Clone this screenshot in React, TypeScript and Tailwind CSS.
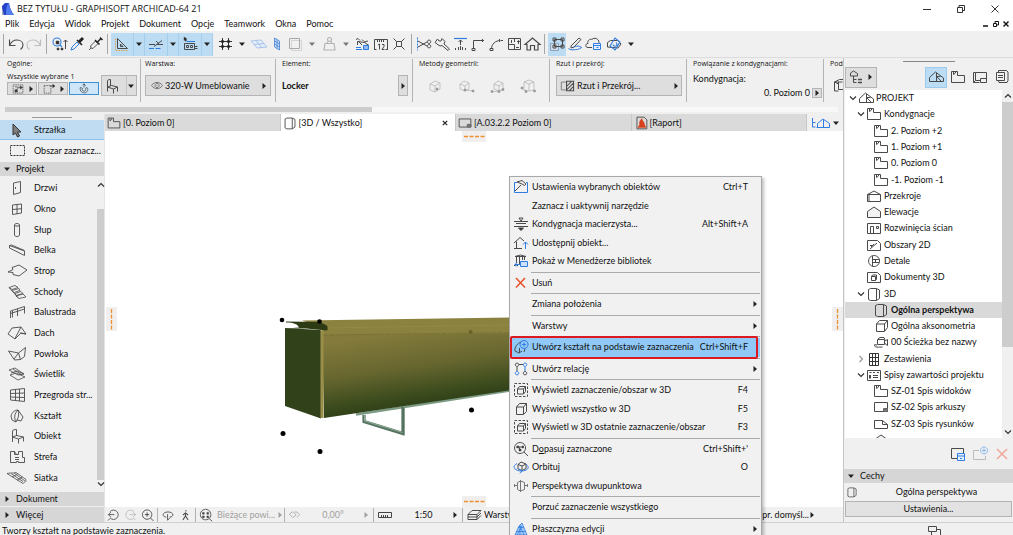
import React from "react";

type Shape = { d: string; c?: string; f?: string; w?: number; dash?: string };

const BLUE = "#2f7de1";
const RED = "#d9411e";
const ORANGE = "#e0a050";

const ICONS: Record<string, Shape[]> = {
  undo: [{ d: "M3.5 3.5v6h6M3.5 9.5C5 6 8 4 11 4c4 0 6 2.5 6 5 0 2-1 3.5-2.5 4.5", w: 1.1 }],
  redo: [{ d: "M16.5 3.5v6h-6M16.5 9.5C15 6 12 4 9 4 5 4 3 6.5 3 9c0 2 1 3.5 2.5 4.5", c: "#bdbdbd", w: 1.1 }],
  find: [
    { d: "M12 6a4 4 0 1 1-8 0 4 4 0 0 1 8 0M11 9l2 2", c: BLUE, w: 1.1 },
    { d: "M16.5 13V4M14.5 6l2-2 2 2" },
    { d: "M7 5h3v3H7zM8 12h2v2H8zM12 12h2v2h-2z", f: "#333", w: 0.5 },
  ],
  pick: [
    { d: "M4 14l1-3 5-5 2 2-5 5z", c: BLUE },
    { d: "M10 4l5 5", c: "#222", w: 1.6 },
    { d: "M12 6l4-4", c: "#222", w: 3 },
  ],
  inject: [
    { d: "M4 14l2-2M6 12l-.5-2 5-5 2.5 2.5-5 5z", c: "#555" },
    { d: "M10 4l4.5 4.5M12.5 6L16 2.5M15 1.5l2.5 2.5", c: "#222", w: 1.5 },
  ],
  setsquare: [
    { d: "M5.5 2.5v10h10zM8.5 8v2.5H11z" },
    { d: "M3.5 2.5v12h13", c: ORANGE, dash: "1.5 1" },
  ],
  guide: [
    { d: "M3 12.5h13", c: BLUE, dash: "5 1.5" },
    { d: "M3 8.5h6M8 10.5l8-6M10 5l3 3M11 8.5h6" },
  ],
  snapref: [
    { d: "M4.5 7.5h10v6h-10zM6.5 9.5h2v2h-2zM10.5 9.5h2v2h-2zM14.5 10.5h3M14.5 12.5h3" },
    { d: "M4 1l3 2-1 .5.5 1.5-1 .3-.7-1.5L4 4.5z", f: "#222", w: 0.5 },
    { d: "M7 5.5h8", c: BLUE },
  ],
  hash: [
    { d: "M7.5 2v12M13.5 2v12M4 5.5h13M4 10.5h13", c: "#333" },
    { d: "M6.5 4.5h2v2h-2zM12.5 4.5h2v2h-2zM6.5 9.5h2v2h-2zM12.5 9.5h2v2h-2z", w: 0.5, f: "#222", c: "#222" },
  ],
  planeFlat: [{ d: "M2 5l10-1 6 7-10 1zM5 8.5l10-1M7 4.7l6 7", c: "#a8c4ea", f: "#e4edf9" }],
  planeTilt: [{ d: "M7.5 2l5 3v9l-5-3zM7.5 5l5 3M7.5 8l5 3M10 3.5v9", c: "#5f92d8", f: "#c5dbf6" }],
  trace: [
    { d: "M6.5 4.5h10v10h-10z", c: "#d4d4d4" },
    { d: "M4.5 2.5h10v10h-10z", c: "#a8a8a8" },
  ],
  weight: [{ d: "M6 7.5h9l1 6.5H5zM8.5 7V5.5M12.5 7V5.5M10.5 1.5a2 2 0 1 0 .1 0", c: "#b4b4b4", w: 1.2 }],
  truck: [
    { d: "M4.5 9V5.5l7 1 4.5 3M3 3.5l2-1 2 2M11 6l4-1M5 5l4 4M9 3.5l2 2" },
    { d: "M10.5 9.5h5v4h-5zM3 13.5h6M3 11.5h5", c: BLUE, f: "#8fb9f0" },
  ],
  ruler12: [{ d: "M3.5 14V3.5h13V14M6.5 4v2M8.5 4v2M10.5 4v2M12.5 4v2M7 9l1.5-1v5.5M11 8.5h2v2l-2 3h2.500M3.5 13.5h2M14.500 13.5h2" }],
  explode: [{ d: "M7.5 5.5h5v5h-5zM4.5 2.5l3 3M15.5 2.5l-3 3M4.5 13.5l3-3M15.5 13.5l-3-3" }],
  scissors: [
    { d: "M3.5 1.5v13", c: BLUE, dash: "2 1" },
    { d: "M4 5l9 5M4 11l9-5M15 4a1.7 1.7 0 1 0 .1 0M15 8.5a1.7 1.7 0 1 0 .1 0" },
  ],
  wrench: [{ d: "M3 6.500L5.500 3l1.500 2h2l1-2.500 3 3-1 2.500 5.500 5-1.500 1.500L10 9.500 8 10 5 8z" }],
  align: [
    { d: "M4 2.500h13", c: BLUE, w: 1.2 },
    { d: "M10.5 9V4M8.5 6l2-2 2 2M5.5 12v2M8.5 11v3M10.500 10v4M12.5 11v3M15.500 12v2" },
  ],
  corner: [{ d: "M5.5 13V4.5H16M4 12.5h3v2H4zM14.5 3v3" }],
  fillet: [{ d: "M5.5 13c0-5 4-8.5 9-8.5M13.5 3v3M4 12.5h3v2H4zM15 4.5h2" }],
  resize: [{ d: "M4.5 2.5h12v11h-12zM4.5 8.5h6v5M10.5 3v3M7.5 4v3M12 11.5h3M14.5 5v3M13 6l1.5-1.5L16 6" }],
  house: [{ d: "M3 8.5L10.5 2 18 8.5h-2V14h-3.5V9.5h-4V14H5V8.5z", w: 1.2 }],
  group: [
    { d: "M3.5 7.5h8v7h-8z", c: "#8aa4bd", f: "#d0dde8" },
    { d: "M7.5 3.5h8v7h-8zM6 2h3v3H6zM14 2h3v3h-3zM6 9h3v3H6zM14 9h3v3h-3z" },
  ],
  markup: [
    { d: "M6 10l8-8 2 1.5-7 7.5-3 1z" },
    { d: "M4 12c-2 3 13 2 12.5-1M8 12c3-3 9-2 8 0", c: BLUE },
  ],
  cloud: [
    { d: "M9 11.5H5c-3 0-3-4 0-4-1-3 2-5 4-4 2-2.5 7-1 7 3l.5.5" },
    { d: "M10.5 7.5h7v6h-7zM10.5 9.5h7M13.5 11.5h2", c: BLUE, f: "#e7f1ff" },
  ],
  cube3: [
    { d: "M3.5 11V6.5l3-2h7l3.5 3.5-3 4-10.500-1z" },
    { d: "M6 10l5-8 5 4-5 8zM9 8.5a2 2 0 1 0 3-2", c: BLUE, w: 1.1 },
  ],
  pointer: [{ d: "M6 2l8 8h-3.5l2 4-2 1-2-4L6 13z", f: "#808080", c: "#333" }],
  marquee: [{ d: "M3.5 2.5h14v10h-14z", dash: "2 1", c: "#333" }],
  marqueeArrow: [
    { d: "M3.5 3.5h9v10h-9z", dash: "2 1" },
    { d: "M11 4h5M15 2l3 2-3 2z", f: "#222" },
  ],
  selArrow: [
    { d: "M3.5 2.5h13v11h-13z", dash: "2 1" },
    { d: "M6 11l5-5M6 5l7 1M13 4l3 2-3 2zM6 9h3v3H6z", f: "#333" },
  ],
  magnetic: [{ d: "M5 6c-1 5 3 8 7 7 3-1 4-5 2-7l-2 1c1 2 0 4-2 4S7 9 8 7zM10 1v5M8 3l2-2 2 3" }],
  chair: [{ d: "M5.5 13.5V3c0-1 1-1.5 3-1.5V8M5.5 9l4-1.5 6 1.5-4 2zM11.5 11v4.5M15.5 9v4.5" }],
  eye: [{ d: "M2 8c4-6 12-6 16 0-4 6-12 6-16 0zM10 5a3 3 0 1 0 .1 0M10 7.5v1.5" }],
  hatch: [
    { d: "M3.5 3.5h6v9h-6z", c: "#777" },
    { d: "M9.5 2.5h8v11h-8zM10 8l5-5M10 12l7-7M13 13l4-4", w: 1.2 },
  ],
  geo1: [{ d: "M5 6l5-3 5 2v6l-5 3-5-2zM5 6l5 2 5-3M10 8v6" , c: "#c2c2c2" }, { d: "M11 10h2v2h-2z", c: "#999", f: "#999", w: 0.5 }],
  geo2: [{ d: "M4 6l4-3 5 2v6l-4 2-5-2zM4 6l5 2 4-3M9 8v5M9 12l8 1", c: "#c2c2c2" }, { d: "M8 11h2v2H8zM16 12h2v2h-2z", c: "#999", f: "#999", w: 0.5 }],
  geo3: [{ d: "M6 6l4-3 5 2v6l-4 2-5-2zM6 6l5 2 4-3M4 13.5h7l4-2M11 8v5", c: "#c2c2c2" }, { d: "M3 12.500h2v2H3zM10 12.500h2v2h-2zM14 10.500h2v2h-2z", c: "#999", f: "#999", w: 0.5 }],
  geo4: [{ d: "M5 4l5-2 5 2v8l-5 1-5-1zM5 4l5 2 5-2M3 10l3 3M10 6v7", c: "#c2c2c2" }, { d: "M2 9h2v2H2zM6 12.500h2v2H6zM14.500 12h2v2h-2z", c: "#999", f: "#999", w: 0.5 }],
  story: [{ d: "M3.5 2.5h6v4h7v7h-13zM5.5 3v2.5l2-1.5V3" }],
  sheet: [
    { d: "M3.5 3.5h13v9h-13z" },
    { d: "M12.5 9.5h4v3h-4z", f: "#777", c: "#666" },
  ],
  doc: [{ d: "M3.5 4.5h8l5 4v4h-13zM11.5 4.5v4h5" }],
  persp: [{ d: "M4.5 3.5l2-1h6v12h-6l-2-1zM12.500 2.500l3 1.500v8.500l-3 2" }],
  axo: [{ d: "M5.5 6l3-3.5h8v7l-3 4h-8zM5.5 6h8v7M13.5 6l3-3.5" }],
  path3: [{ d: "M6.5 5.5h7v5h-7zM14 7l2.5-1.5v6L14 9.5M7 5l2-1.5h4l1 2M3.5 11c0 3 4 2 8 2M6 11l-2.5-.5" }],
  report: [
    { d: "M5.5 1.5h8l3 3v10h-11z" },
    { d: "M11 3c-3 3-3 5-2.5 7L6.5 13h9l-1.5-3c0-3-2-3-3-7z", c: RED, f: RED, w: 0.5 },
  ],
  door: [{ d: "M6.5 3l7-1.5v11l-7 2zM8.5 7v2", w: 0.9 }],
  window: [{ d: "M5.5 4l9-1v9l-9 1.5zM10 3.5v9.5M5.5 8.5l9-.8", w: 0.9 }],
  column: [{ d: "M7.5 3v10c0 2 5 2 5 0V3c0-2-5-2-5 0zM7.5 3c0 1.5 5 1.5 5 0", w: 0.9 }],
  beam: [{ d: "M2.5 3.5l15 5.500v4.500l-15-7.500zM2.5 3.5l2-.5 13 5.500", w: 0.9 }],
  slab: [{ d: "M1 9l5-2.5-1-2 7-2.5 8 5-8 6-6-1.5v-2z", w: 0.9 }],
  stair: [{ d: "M2 3.5l6-2 3 2-6 2zM5 6.5l7-2 1 2-6 2zM8 9.5l6-2 2 2-7 2zM9 12l7-2 3 3-7 1.5zM2 3.5l9 10", w: 0.8 }],
  rail: [{ d: "M3.5 14V7l14-4.500v7M3.5 9.500l14-4.500M10.5 5v7M5.500 7v6.500", w: 0.9 }],
  roof: [{ d: "M1 9l4-6 9-1 5 7-5-1-6 6zM14 2L8 13.5M13 8l6 1", w: 0.9 }],
  shell: [{ d: "M1.5 5l10 2 7-5.500-1 9-4 3-6 .5zM7 13l4.5-6 2 6.500", w: 0.9 }],
  skylight: [{ d: "M2 4l6-2 9 6-6 1zM3 9l6-2 9 4-7 3zM4 7l6-2 7 3M6 3l9 6", w: 0.8 }],
  curtain: [{ d: "M3.5 3l14-1.5v13L3.5 13zM8.5 2.5v11M12.5 2v12M3.5 6.5l14-.5M3.5 10l14 .5", w: 0.9 }],
  morph: [{ d: "M4 8c1-4 4-6 7-6l5 7-2 4-4-1c2-3 2-7 1-10M11 2C7 6 7 10 9 14M4 8l1 4 4 2 1-2", w: 0.9 }],
  object: [{ d: "M5.5 14V3c0-1 2-1.5 4-1.5V8M5.5 9l4-1.5 7 1.5-5 2zM11.5 11v4.5M16.5 9v4.5", w: 0.9 }],
  zone: [{ d: "M3.5 2.5h4v3h4v-3h4v6h2v5h-6v-1h-2v1h-6zM7.5 2.5l2 3M8 8.5h4M8 10.5h4", w: 0.9 }],
  mesh: [{ d: "M0 3.5c5-1 6 0 9-1l10 7c0 4-2 2-3 4zM4 3.5l12 8M7 3l11 8M5 7c3-2 4-1 6-4M10 10.5c3-3 4-1 5-4", w: 0.8 }],
  home: [{ d: "M3.5 12.5V8.5L9.500 3l8 6v3.500zM10.5 4v8.500M10.5 7.500l5 5M10.500 7.500h4" }],
  homeBlue: [{ d: "M1.5 3v9h3M1.5 7.5h3M6.5 12.5V8.5L12 4l6.5 4.5v4M5.5 12.5h13M12.5 5v7.5", c: BLUE }],
  section: [{ d: "M3.5 6.5L10 3l6.5 3.5v7h-13zM3.5 6.5h13M5 6.5v7" }],
  elev: [{ d: "M3.5 7.5L10 3l6.5 4.5v6h-13z", f: "#f2f2f2" }],
  interior: [{ d: "M3.5 3.5h13v10h-13zM6.5 13V6.5h3V13M12.5 6.5h2v2h-2z" }],
  area2d: [{ d: "M3.5 3.5h10l3 3v7h-13zM6 12l7-6M6 8.5h3M7 10l3-3" }],
  detail: [{ d: "M10 2.5a5.5 5.5 0 1 0 .1 0M8.5 3v10.5M8.5 6.5h7M8.5 9.5H15M11.5 6v4" }],
  doc3d: [{ d: "M3.5 3.5h10l3 3v7h-13zM7.5 7.5l1-1.5h4v4l-1 1.5h-4zM7.5 7.5h4v4" }],
  schedule: [{ d: "M5.5 2.5h9v12h-9zM8.5 2.5v12M11.5 2.5v12M5.5 6.5h9M5.5 10.5h9", c: "#333" }],
  index: [{ d: "M3.5 3.5h13v10h-13zM5.5 5.5h2M9 5.5h2M5.5 8v3.5M6.5 8v3.5M9 8.5h5M9 10.5h5M13 5.5h2" }],
  layout: [{ d: "M5.500 11.500V3.500H3.500v10l2-2M3.500 13.500h6M5.500 3.500h11v10h-6v-4h6M10.500 11.500h-5" }],
  book: [{ d: "M4.5 3.5h8v8h-8zM6.5 3V1.5h8l1.5 1.5v8.5l-1 2H7l-.5-2M6 6.5h5M6 8.500h5" }],
  pubtree: [{ d: "M4.5 7V4l3-2 4 2.5V7zM7.5 7v6.5h3M7.5 10.5h3" }, { d: "M12 10.5h4M12 13.5h4", w: 1.4 }],
  saveView: [
    { d: "M9 12.5H3.5v-10h12V7" },
    { d: "M9.5 7.5h7v7h-7zM9.5 10h7M12 12.5h2", c: BLUE, f: "#e7f1ff" },
  ],
  newView: [
    { d: "M9 4.5H3.5v9h12V10", c: "#bbb" },
    { d: "M14 1a3.5 3.5 0 1 0 .1 0M14 2.5v4M12 4.5h4", c: "#8db8ef" },
  ],
  cross: [{ d: "M5 3l9 9.5M14 3l-9 9.5", c: "#e8502a", w: 1.5 }],
  crossPale: [{ d: "M5 3l10 10M15 3L5 13", c: "#f0a898", w: 1.5 }],
  settings: [
    { d: "M6 3.5H3.5v10h13v-10H15", c: BLUE },
    { d: "M4 12l6-6M6 3l5-1.5 4 3.5-1.5 1.5L11 5z" },
  ],
  storey: [
    { d: "M3 5.5h14M5 7.5h10M3 10.5h14M8 2h4l-2 3z" },
    { d: "M7.5 12h5L10 14.5z", f: "#222" },
  ],
  share: [
    { d: "M3 8l6-5.5 4 3.5M5.5 6.5v7H11M3 13.5h3" },
    { d: "M14.5 14V7M12 9.5L14.5 7 17 9.5", c: BLUE },
  ],
  library: [
    { d: "M4 3.5L9.5 2 15 3.5zM5.5 4v7M8.5 4v7M11.5 4v3M13.5 4v3M3 12.5h4" },
    { d: "M9.5 8.5h7v5h-7zM4 11.5h5M6 9.5l-2 2 2 2", c: BLUE, f: "#cfe2fb" },
  ],
  morphAdd: [
    { d: "M4 12c-1-4 3-8 6-9M4 12l4 2 3-2M8.5 14V9M14 10l-1 3" },
    { d: "M13 1.5a4 4 0 1 0 .1 0M13 3.5v4M11 5.5h4", c: BLUE },
  ],
  relation: [
    { d: "M6 2a1.7 1.7 0 1 0 .1 0M14 10.5a1.7 1.7 0 1 0 .1 0M8 3.5h4M6 6v4" },
    { d: "M14 2a1.7 1.7 0 1 0 .1 0M6 10.5a1.7 1.7 0 1 0 .1 0M14 6v4", c: BLUE },
  ],
  boxSel: [
    { d: "M3.5 1.5h13v13h-13z", dash: "2.5 1.5" },
    { d: "M6.5 7l2-2.5h6v5l-2 2.5h-6zM6.5 7h6v5M12.5 7l2-2.5" },
  ],
  box: [{ d: "M5.5 6l3-3.5h7v8l-3 3h-7zM5.5 6h7v7M12.5 6l3-3.5" }],
  fit: [
    { d: "M9 1.5a5.5 5.5 0 1 0 .1 0M13 11l4 4" },
    { d: "M6 5h2v2H6zM11 5h1.5v2H11zM8 8h2v2H8z", f: "#333", w: 0.5 },
    { d: "M5 6h8M7 5l3 5" },
  ],
  orbit: [
    { d: "M7 5.5l3-2.5 5 2v4.5l-4 2-4-1.5zM7 5.5l4 1.5 4-2M11 7v4.5" },
    { d: "M6 4.5c-7 4 0 8 5 7.5 8-1 7-5 4-6.5M8 10l3 2-2 2.5", c: BLUE },
  ],
  twoPoint: [{ d: "M6.5 4.5l3-1.5 4 1.5v7l-4 1.5-3-1.5zM9.5 2v12M3 7.5h3M17 7.5h-3M3.5 6v3M16.5 6v3", c: "#777" }],
  editPlane: [{ d: "M4 14l4-9 3-3 5 12zM5 10.5h10M7 6.5h6M9 4v10M6 14l5-9M13 14L9 5", c: BLUE, f: "#a9cbf5", w: 0.8 }],
  zoomPrev: [{ d: "M6 4a5.5 5.5 0 1 1 0 7.5M4 7.5h7M7 4.5l-3 3 3 3M6 12l-2.5 2.5" }],
  zoomNext: [{ d: "M14 4a5.5 5.5 0 1 0 0 7.5M16 7.5H9M13 4.5l3 3-3 3M14 12l2.5 2.5", c: "#b9b9b9" }],
  zoomIn: [{ d: "M9.5 2a5.5 5.5 0 1 0 .1 0M13.5 11.5L17 15M7 7.5h5M9.5 5v5", w: 1.1 }],
  orbitSm: [{ d: "M8 10.5c-6-1-4-6 2-6s8 5 2 6M9.5 7v7l3-3" }],
  walk: [{ d: "M10.5 2v2M10 5v4l-3 5M10 9l3 5M7 8l3-2.5L13 8", w: 1.2 }],
  fitAll: [
    { d: "M9.5 1.5a6 6 0 1 0 .1 0M13.5 12L17 15" },
    { d: "M6 5h2v2H6zM11 5h2v2h-2zM6 9h2v2H6zM11 9h2v2h-2z", f: "#333", w: 0.5 },
  ],
  rotate: [{ d: "M4 7l4-3 4 4-4 3zM10 4.5h3l3 3-3 3.5", c: "#aaa" }],
  scale: [{ d: "M3.5 5.5h13v5h-13zM6.5 8v2M8.5 8v2M10.5 8v2M12.5 8v2", c: "#444" }],
  layers: [{ d: "M4 7.5l4-4h9l-4 4zM4 10h9l4-4M4 12.5h9l4-4M4 7.5v5M13 7.5v5" }],
  windows: [{ d: "M4.5 3.5h8v5h-8zM7.5 9v3.5h9v-6h-4" }],
  column3d: [{ d: "M4.5 5l5-2.5h7v10h-8V7zM4.5 5h8M8.5 7V5M4.5 5v9h4" }],
};

function Icon({ name, size = "h-4 w-5" }: { name: string; size?: string }) {
  return (
    <svg viewBox="0 0 20 16" className={`shrink-0 ${size}`} aria-hidden="true">
      {ICONS[name].map((p, i) => (
        <path key={i} d={p.d} fill={p.f ?? "none"} stroke={p.c ?? "#4a4a4a"} strokeWidth={p.w ?? 1} strokeDasharray={p.dash} />
      ))}
    </svg>
  );
}

function Tri({ dir = "right", className = "text-[#222]" }: { dir?: "right" | "down"; className?: string }) {
  return (
    <svg viewBox="0 0 6 6" className={`size-[6px] shrink-0 ${className}`} aria-hidden="true">
      <path d={dir === "right" ? "M1.5 0v6L5 3z" : "M0 1.5h6L3 5z"} fill="currentColor" />
    </svg>
  );
}

function Chevron({ dir }: { dir: "up" | "down" | "right" }) {
  const d = dir === "up" ? "M1 5.5L4 2.5l3 3" : dir === "down" ? "M1 2.5L4 5.5l3-3" : "M2.5 1L5.5 4l-3 3";
  return (
    <svg viewBox="0 0 8 8" className="size-[8px] shrink-0" aria-hidden="true">
      <path d={d} fill="none" stroke={dir === "right" ? "#999" : "#333"} strokeWidth="1.2" />
    </svg>
  );
}

const Bar = () => <span className="mx-[3px] h-5 w-px shrink-0 bg-[#a6a6a6]" />;

function Tool({ name, active }: { name: string; active?: boolean }) {
  return (
    <button aria-label={name} className={`flex h-[23px] w-[18px] shrink-0 items-center justify-center ${active ? "bg-[#bcdcf4]" : ""}`}>
      <Icon name={name} />
    </button>
  );
}

function Drop({ pale }: { pale?: boolean }) {
  return (
    <button aria-label="Rozwiń" className="flex h-[23px] w-4 shrink-0 items-center justify-center">
      <Tri dir="down" className={pale ? "text-[#777]" : "text-[#222]"} />
    </button>
  );
}

function SplitTool({ name }: { name: string }) {
  return (
    <div className="flex h-[23px] w-[34px] shrink-0 border-r border-[#a5cdec] bg-[#bcdcf4]">
      <button aria-label={name} className="flex w-[23px] items-center justify-center border-r border-[#a5cdec]">
        <Icon name={name} />
      </button>
      <button aria-label="Rozwiń" className="flex flex-1 items-center justify-center">
        <Tri dir="down" />
      </button>
    </div>
  );
}

function TitleBar() {
  return (
    <header className="bg-white">
      <div className="flex h-[17px] items-center pl-[2px]">
        <svg viewBox="0 0 12 12" className="size-3" aria-hidden="true">
          <path d="M0 12V3l3-3h4c1 5 2 8 5 12z" fill="#2340c8" />
          <path d="M4 12C4 7 4 3 6.5 0 8 5 9 9 12 12z" fill="#4f7df0" />
          <path d="M0 12V4l2 8z" fill="#9aa4c0" />
        </svg>
        <h1 className="ml-[3px] flex-1 font-['Open_Sans','Noto_Sans',sans-serif]">BEZ TYTUŁU - GRAPHISOFT ARCHICAD-64 21</h1>
        <div className="flex w-[90px] items-center justify-between pr-[14px]">
          <button aria-label="Minimalizuj"><svg viewBox="0 0 8 8" className="size-2"><path d="M0 4.5h8" stroke="#333" /></svg></button>
          <button aria-label="Przywróć"><svg viewBox="0 0 8 8" className="size-2"><path d="M.5 2.5h5v5h-5zM2 2.5v-2h5.5v5h-2" fill="none" stroke="#333" /></svg></button>
          <button aria-label="Zamknij"><svg viewBox="0 0 8 8" className="size-2"><path d="M.5 .5l7 7M7.5 .5l-7 7" stroke="#333" /></svg></button>
        </div>
      </div>
      <div className="flex h-[14px] items-center pl-[5px]">
        <nav className="flex flex-1 gap-[10px]">
          {["Plik", "Edycja", "Widok", "Projekt", "Dokument", "Opcje", "Teamwork", "Okna", "Pomoc"].map((m) => (
            <button key={m}>{m}</button>
          ))}
        </nav>
        <div className="flex gap-[4px] pr-[4px]">
          <button aria-label="Minimalizuj okno"><svg viewBox="0 0 6 6" className="size-[6px]"><path d="M0 5h5" stroke="#111" strokeWidth="1.5" /></svg></button>
          <button aria-label="Przywróć okno"><svg viewBox="0 0 6 6" className="size-[6px]"><path d="M.5 2.5h3v3h-3zM2 2V.5h3.5v3.5H4" fill="none" stroke="#111" /></svg></button>
          <button aria-label="Zamknij okno"><svg viewBox="0 0 6 6" className="size-[6px]"><path d="M.5 .5l5 5M5.5 .5l-5 5" stroke="#111" strokeWidth="1.4" /></svg></button>
        </div>
      </div>
    </header>
  );
}

function Toolbar() {
  return (
    <div className="flex h-[27px] shrink-0 items-center border-b border-[#dcdcdc]">
      <Bar />
      <Tool name="undo" /><Tool name="redo" /><Bar />
      <Tool name="find" /><Tool name="pick" /><Tool name="inject" /><Bar />
      <SplitTool name="setsquare" /><SplitTool name="guide" /><SplitTool name="snapref" />
      <span className="w-[3px]" />
      <Tool name="hash" /><Drop /><Tool name="planeFlat" /><Tool name="planeTilt" /><Tool name="trace" /><Drop pale />
      <Tool name="weight" /><Drop pale /><Tool name="truck" /><Tool name="ruler12" /><Tool name="explode" /><Bar />
      <Tool name="scissors" /><Tool name="wrench" /><Tool name="align" /><Tool name="corner" /><Tool name="fillet" /><Tool name="resize" /><Tool name="house" />
      <Bar />
      <Tool name="group" active /><Tool name="markup" /><Tool name="cloud" />
      <span className="w-[3px]" />
      <Tool name="cube3" /><Drop />
    </div>
  );
}

const label7 = "font-['Open_Sans','Noto_Sans',sans-serif] text-[7px] leading-[10px]";

function Section({ title, children }: { title: string; children: React.ReactNode }) {
  return (
    <section className="mr-[6px] flex h-[43px] w-[131px] shrink-0 flex-col border-r border-[#b4b4b4] pr-[4px]">
      <h2 className={label7}>{title}</h2>
      {children}
    </section>
  );
}

const field = "flex items-center border border-[#b4b4b4] bg-[#dedede]";

function InfoBox() {
  return (
    <div className="h-[56px] shrink-0 overflow-hidden">
      <div className="flex h-[49px] pt-[1px] pl-[7px]">
        <section className="mr-[4px] flex h-[43px] w-[134px] shrink-0 border-r border-[#b4b4b4]">
          <div className="w-[94px]">
            <h2 className={label7}>Ogólne:</h2>
            <p className={`mt-[3px] ${label7}`}>Wszystkie wybrane 1</p>
            <div className="flex gap-px">
              <button aria-label="Zaznaczone" className={`${field} h-[13px] w-[30px] justify-between pr-[3px]`}><Icon name="selArrow" size="h-3 w-5" /><Tri /></button>
              <button aria-label="Obszar" className={`${field} h-[13px] w-[30px] justify-between pr-[3px]`}><Icon name="marqueeArrow" size="h-3 w-5" /><Tri /></button>
              <button aria-label="Przyciąganie" className="flex h-[13px] w-[30px] items-center justify-center border border-[#3c8fd0] bg-[#cfe6f8]"><Icon name="magnetic" size="h-3 w-5" /></button>
            </div>
          </div>
          <button aria-label="Krzesło" className={`${field} mt-4 h-[21px] w-9 justify-between pr-[2px]`}>
            <Icon name="chair" />
            <span className="flex h-full items-center border-l border-[#c4c4c4] pl-px"><Tri dir="down" /></span>
          </button>
        </section>
        <Section title="Warstwa:">
          <button className={`${field} mt-[6px] h-[21px] gap-px pr-[3px] pl-[4px]`}>
            <Icon name="eye" size="h-[11px] w-[14px]" />
            <span className="flex-1 text-left">320-W Umeblowanie</span>
            <Tri />
          </button>
        </Section>
        <Section title="Element:">
          <div className="mt-[6px] flex h-[21px] items-center justify-between">
            <b className="font-bold">Locker</b>
            <button aria-label="Wybierz element" className={`${field} h-[21px] w-[10px] justify-center`}><Tri /></button>
          </div>
        </Section>
        <Section title="Metody geometrii:">
          <div className="mt-[6px] flex h-[21px] items-center justify-around">
            {["geo1", "geo2", "geo3", "geo4"].map((g) => (
              <button key={g} aria-label={g}><Icon name={g} /></button>
            ))}
          </div>
        </Section>
        <Section title="Rzut i przekrój:">
          <button className={`${field} mt-[6px] h-[21px] pr-[2px]`}>
            <Icon name="hatch" size="h-[14px] w-5" />
            <span className="flex-1 text-left">Rzut i Przekrój...</span>
            <Tri />
          </button>
        </Section>
        <Section title="Powiązanie z kondygnacjami:">
          <p className="mt-[4px] leading-[12px]">Kondygnacja:</p>
          <div className="-mr-[3px] mt-[3px] flex items-center justify-end gap-[2px]">
            <span className="leading-[10px]">0. Poziom 0</span>
            <button aria-label="Wybierz kondygnację" className={`${field} size-[10px] justify-center`}><Tri /></button>
          </div>
        </Section>
        <section className="min-w-0 flex-1 overflow-hidden">
          <h2 className={label7}>Pods</h2>
          <div className="mt-[8px]"><Icon name="column3d" /></div>
        </section>
      </div>
      <div className="mx-[5px] h-[5px] bg-[#f8f8f8]">
        <div className="h-full w-[44%] bg-[#cdcdcd]" />
      </div>
    </div>
  );
}

const TOOLS: [string, string][] = [
  ["door", "Drzwi"], ["window", "Okno"], ["column", "Słup"], ["beam", "Belka"], ["slab", "Strop"],
  ["stair", "Schody"], ["rail", "Balustrada"], ["roof", "Dach"], ["shell", "Powłoka"], ["skylight", "Świetlik"],
  ["curtain", "Przegroda str..."], ["morph", "Kształt"], ["object", "Obiekt"], ["zone", "Strefa"], ["mesh", "Siatka"],
];

function ToolRow({ icon, label, className = "" }: { icon: string; label: string; className?: string }) {
  return (
    <button className={`flex min-h-0 items-center gap-[7px] pl-[7px] text-left whitespace-nowrap ${className}`}>
      <Icon name={icon} />
      {label}
    </button>
  );
}

function Group({ label, dir = "right", className = "h-[14px]" }: { label: string; dir?: "right" | "down"; className?: string }) {
  return (
    <button className={`flex shrink-0 items-center gap-[6px] bg-[#d6d6d6] pl-[4px] text-left ${className}`}>
      <Tri dir={dir} />
      {label}
    </button>
  );
}

function Toolbox() {
  return (
    <aside className="flex w-[105px] shrink-0 flex-col border-r border-[#e4e4e4]">
      <div className="flex h-[6px] shrink-0 items-center justify-center"><span className="h-px w-10 bg-[#999]" /></div>
      <ToolRow icon="pointer" label="Strzałka" className="h-5 shrink-0 border-b border-[#8fc2ea] bg-[#bfdcf3]" />
      <ToolRow icon="marquee" label="Obszar zaznacz..." className="h-[22px] shrink-0" />
      <Group label="Projekt" dir="down" />
      <div className="flex min-h-0 flex-1 pt-[2px] pb-[3px]">
        <div className="flex min-h-0 min-w-0 flex-1 flex-col overflow-hidden">
          {TOOLS.map(([i, l]) => (
            <ToolRow key={l} icon={i} label={l} className="flex-1" />
          ))}
        </div>
        <div className="flex w-[7px] shrink-0 flex-col items-center pt-[3px]">
          <Chevron dir="up" />
          <div className="mt-[20px] w-full flex-1 bg-[#cdcdcd]" />
          <Chevron dir="down" />
        </div>
      </div>
      <Group label="Dokument" className="mt-px h-[14px]" />
      <Group label="Więcej" className="mt-px h-[15px]" />
    </aside>
  );
}

function Tab({ icon, label, active }: { icon: string; label: string; active?: boolean }) {
  return (
    <button role="tab" aria-selected={!!active} className={`flex min-w-0 flex-1 items-center border-r border-[#c8c8c8] pr-[7px] ${active ? "bg-white" : "bg-[#dadada]"}`}>
      <Icon name={icon} size="h-4 w-[18px]" />
      <span className="flex-1 text-left whitespace-nowrap">{label}</span>
      {active && <svg viewBox="0 0 6 6" className="size-[6px]"><path d="M.8 .8l4.4 4.4M5.2 .8L.8 5.2" stroke="#222" strokeWidth="1.2" /></svg>}
    </button>
  );
}

function Guide({ vertical, className }: { vertical?: boolean; className: string }) {
  return (
    <span className={`absolute flex items-center justify-center bg-[#f0efee] ${vertical ? "h-6 w-[11px]" : "h-[11px] w-6"} ${className}`}>
      <svg viewBox={vertical ? "0 0 3 22" : "0 0 22 3"} className={vertical ? "h-[22px] w-[3px]" : "h-[3px] w-[22px]"} aria-hidden="true">
        <path d={vertical ? "M1.5 1v21" : "M1 1.5h21"} stroke="#ee9030" strokeWidth="1.3" strokeDasharray="4 1.5" />
      </svg>
    </span>
  );
}

function Scene() {
  return (
    <div className="relative min-h-0 flex-1 overflow-hidden bg-white">
      <svg viewBox="105 131 738 376" className="h-[376px] w-[738px]" role="img" aria-label="Szafka w widoku 3D">
        <defs>
          <linearGradient id="front" gradientUnits="userSpaceOnUse" x1="400" y1="333" x2="411" y2="408">
            <stop offset="0" stopColor="#837a3b" />
            <stop offset="0.45" stopColor="#686730" />
            <stop offset="0.85" stopColor="#3a4a1c" />
            <stop offset="1" stopColor="#2f3f18" />
          </linearGradient>
        </defs>
        <path d="M356 414.5L640 370" stroke="#7d9a84" strokeWidth="2.5" />
        <path d="M364 415v6.5l39 12V407" fill="none" stroke="#557360" strokeWidth="3.2" />
        <path d="M364.5 415v6l38 11.5" fill="none" stroke="#8eab95" strokeWidth="1" />
        <path d="M404.5 407v27" stroke="#86a18c" strokeWidth="1" />
        <path d="M322 333L640 330V371L324 418z" fill="url(#front)" />
        <path d="M302 320.5L640 315.5V332L322 335V328z" fill="#8b823f" />
        <path d="M322 335L640 331" stroke="#756e35" strokeWidth="0.8" strokeDasharray="6 1" />
        <path d="M322 328L640 323" stroke="#958b48" strokeWidth="0.8" />
        <path d="M285 328L321 330V418.5L285 406z" fill="#31421b" />
        <path d="M320 330.5h3.5V418H320z" fill="#9a8f49" />
        <path d="M320.5 331V418" stroke="#5d6030" strokeWidth="0.8" />
        <path d="M286 321.5l34 .5 6 3c2 1 2 4 1 5.5l-21-2h-20l13-1c-1-3-5-5-13-5z" fill="#2d3b15" />
        <g fill="#000">
          <circle cx="282" cy="320" r="2.3" />
          <circle cx="319.5" cy="321.5" r="2.3" />
          <circle cx="471.5" cy="410" r="2.5" />
          <circle cx="283" cy="433.5" r="2.5" />
          <circle cx="320" cy="451.5" r="2.5" />
        </g>
        <circle cx="470.5" cy="332" r="2" fill="#6a6128" />
      </svg>
      <Guide className="inset-x-0 top-0 mx-auto" />
      <Guide className="inset-x-0 bottom-0 mx-auto" />
      <Guide vertical className="inset-y-0 left-px my-auto" />
      <Guide vertical className="inset-y-0 right-0 my-auto" />
    </div>
  );
}

const VBar = () => <span className="mx-px h-[14px] w-px shrink-0 bg-[#b0b0b0]" />;

function ViewBar() {
  const small = "h-[14px] w-[17px]";
  return (
    <div className="flex h-[15px] shrink-0 items-center bg-[#f0f0f0] whitespace-nowrap">
      <button aria-label="Poprzedni widok"><Icon name="zoomPrev" size="h-4 w-[17px]" /></button>
      <button aria-label="Następny widok"><Icon name="zoomNext" size="h-4 w-[17px]" /></button>
      <button aria-label="Powiększ"><Icon name="zoomIn" size="h-4 w-[17px]" /></button>
      <VBar />
      <button aria-label="Orbituj"><Icon name="orbitSm" size="h-[14px] w-[18px]" /></button>
      <button aria-label="Spacer"><Icon name="walk" size={small} /></button>
      <VBar />
      <div className="flex w-[86px] items-center gap-[2px] pr-[3px] text-[#a0a0a0]"><Icon name="fitAll" size="h-[14px] w-[18px]" /><span className="flex-1">Bieżące powi...</span><Tri className="text-[#a0a0a0]" /></div>
      <VBar />
      <div className="flex w-[86px] items-center pr-[3px] text-[#a0a0a0]"><Icon name="rotate" size={small} /><span className="flex-1 text-center">0,00°</span><Tri className="text-[#a0a0a0]" /></div>
      <VBar />
      <div className="flex w-[86px] items-center pr-[3px]"><Icon name="scale" /><span className="flex-1 text-center">1:50</span><Tri /></div>
      <VBar />
      <div className="flex flex-1 items-center"><Icon name="layers" /><span>Warstwy</span></div>
      <div className="flex items-center pr-[28px]"><span>03 Architektura pr. domyśl...</span><Tri /></div>
    </div>
  );
}

type Node = [number, string, string, ("down" | "right")?];
const TREE: Node[] = [
  [0, "home", "PROJEKT", "down"], [1, "story", "Kondygnacje", "down"], [2, "story", "2. Poziom +2"], [2, "story", "1. Poziom +1"],
  [2, "story", "0. Poziom 0"], [2, "story", "-1. Poziom -1"], [1, "section", "Przekroje"], [1, "elev", "Elewacje"],
  [1, "interior", "Rozwinięcia ścian"], [1, "area2d", "Obszary 2D"], [1, "detail", "Detale"], [1, "doc3d", "Dokumenty 3D"],
  [1, "persp", "3D", "down"], [2, "persp", "Ogólna perspektywa"], [2, "axo", "Ogólna aksonometria"], [2, "path3", "00 Ścieżka bez nazwy"],
  [1, "schedule", "Zestawienia", "right"], [1, "index", "Spisy zawartości projektu", "down"], [2, "story", "SZ-01 Spis widoków"],
  [2, "sheet", "SZ-02 Spis arkuszy"], [2, "doc", "SZ-03 Spis rysunków"],
];
const INDENT = ["pl-[4px]", "pl-[12px]", "pl-[19px]"];

function Navigator() {
  return (
    <aside className="flex w-[170px] shrink-0 flex-col border-l border-[#c4c4c4] pt-px">
      <div className="flex h-[5px] items-center justify-center"><span className="h-px w-[52px] bg-[#888]" /></div>
      <div className="flex h-[26px] shrink-0 items-center pl-px">
        <button aria-label="Mapa projektu" className={`${field} h-[21px] w-8 justify-between pr-[3px]`}><Icon name="pubtree" /><Tri /></button>
        <div className="flex flex-1 justify-end">
          {["home", "story", "layout", "book"].map((n) => (
            <button key={n} aria-label={n} className={`flex h-[21px] w-[22px] items-center justify-center ${n === "home" ? "border border-[#9ccbf0] bg-[#bcdcf4]" : ""}`}>
              <Icon name={n} />
            </button>
          ))}
        </div>
      </div>
      <div className="flex min-h-0 flex-1">
        <ul className="ml-px flex min-w-0 flex-1 flex-col overflow-hidden bg-white">
          {TREE.map(([lv, icon, label, ch]) => {
            const on = label === "Ogólna perspektywa";
            return (
              <li key={label} className={`flex min-h-0 flex-1 ${on ? "bg-[#d9d9d9] font-bold" : ""}`}>
                <button className={`flex items-center text-left whitespace-nowrap ${INDENT[lv]}`}>
                  <span className="flex w-[7px] justify-center">{ch && <Chevron dir={ch} />}</span>
                  <Icon name={icon} />
                  {label}
                </button>
              </li>
            );
          })}
          <li className="flex h-[6px] shrink-0 overflow-hidden pl-[26px]"><Icon name="elev" /></li>
        </ul>
        <div className="flex w-[11px] shrink-0 flex-col items-center py-[2px]">
          <Chevron dir="up" />
          <div className="mt-[2px] w-full flex-[3] bg-[#cdcdcd]" />
          <div className="w-full flex-1" />
          <Chevron dir="down" />
        </div>
      </div>
      <div className="flex h-[31px] shrink-0 items-center justify-end">
        {["saveView", "newView", "crossPale"].map((n) => (
          <button key={n} aria-label={n} className="flex w-[22px] justify-center"><Icon name={n} /></button>
        ))}
      </div>
      <Group label="Cechy" dir="down" />
      <div className="flex h-[18px] shrink-0 items-center">
        <Icon name="persp" size="h-3 w-4" />
        <span className="flex-1 text-center">Ogólna perspektywa</span>
      </div>
      <button className="mx-px mb-[5px] h-[16px] shrink-0 border border-[#b4b4b4] bg-[#e2e2e2]">Ustawienia...</button>
    </aside>
  );
}

type Item = { icon?: string; label: React.ReactNode; key2?: string; sub?: boolean; hot?: boolean } | null;
const MENU: Item[] = [
  { icon: "settings", label: "Ustawienia wybranych obiektów", key2: "Ctrl+T" },
  { label: "Zaznacz i uaktywnij narzędzie" },
  { icon: "storey", label: "Kondygnacja macierzysta...", key2: "Alt+Shift+A" },
  { icon: "share", label: "Udostępnij obiekt..." },
  { icon: "library", label: "Pokaż w Menedżerze bibliotek" },
  null,
  { icon: "cross", label: "Usuń" },
  null,
  { label: "Zmiana położenia", sub: true },
  null,
  { label: "Warstwy", sub: true },
  null,
  { icon: "morphAdd", label: "Utwórz kształt na podstawie zaznaczenia", key2: "Ctrl+Shift+F", hot: true },
  null,
  { icon: "relation", label: "Utwórz relację", sub: true },
  null,
  { icon: "boxSel", label: "Wyświetl zaznaczenie/obszar w 3D", key2: "F4" },
  { icon: "box", label: "Wyświetl wszystko w 3D", key2: "F5" },
  { icon: "boxSel", label: "Wyświetl w 3D ostatnie zaznaczenie/obszar", key2: "F3" },
  null,
  { icon: "fit", label: <>D<u>o</u>pasuj zaznaczone</>, key2: "Ctrl+Shift+'" },
  { icon: "orbit", label: "Orbituj", key2: "O" },
  { icon: "twoPoint", label: "Perspektywa dwupunktowa" },
  null,
  { label: "Porzuć zaznaczenie wszystkiego" },
  null,
  { icon: "editPlane", label: "Płaszczyzna edycji", sub: true },
];

function ContextMenu() {
  return (
    <div role="menu" className="absolute top-[176px] left-[509px] flex h-[364px] w-[253px] flex-col border border-[#a8a8a8] bg-[#f1f1f1] px-px py-px shadow-[2px_2px_3px_rgba(0,0,0,0.25)]">
      {MENU.map((m, i) =>
        m === null ? (
          <div key={i} role="separator" className="flex h-[3px] shrink-0 items-center pl-5"><span className="h-px w-full bg-[#ababab]" /></div>
        ) : (
          <button key={i} role="menuitem" className={`relative flex min-h-0 flex-1 items-center text-left whitespace-nowrap ${m.hot ? "bg-[#90c8f6]" : ""}`}>
            <span className="w-[21px] shrink-0">{m.icon && <Icon name={m.icon} />}</span>
            <span className="flex-1">{m.label}</span>
            {m.key2 && <span className="pr-[12px]">{m.key2}</span>}
            {m.sub && <Tri className="mr-[2px] text-[#222]" />}
            {m.hot && <span className="absolute -inset-y-[2px] right-[2px] -left-px rounded-[2px] border-2 border-[#dc1820]" />}
          </button>
        ),
      )}
    </div>
  );
}

export default function App() {
  return (
    <div className="relative flex h-screen flex-col overflow-hidden bg-[#f0f0f0] font-['Lato','Open_Sans',sans-serif] text-[9px] leading-[12px] text-[#111]">
      <TitleBar />
      <Toolbar />
      <div className="flex min-h-0 flex-1">
        <div className="flex min-w-0 flex-1 flex-col">
          <InfoBox />
          <div className="flex min-h-0 flex-1">
            <Toolbox />
            <main className="flex min-w-0 flex-1 flex-col">
              <div role="tablist" className="flex h-[17px] shrink-0">
                <Tab icon="story" label="[0. Poziom 0]" />
                <Tab icon="persp" label="[3D / Wszystko]" active />
                <Tab icon="sheet" label="[A.03.2.2 Poziom 0]" />
                <Tab icon="report" label="[Raport]" />
                <button aria-label="Nawigator" className="flex w-9 shrink-0 items-center justify-center gap-[2px]"><Icon name="homeBlue" /><Tri dir="down" /></button>
              </div>
              <Scene />
              <ViewBar />
            </main>
          </div>
        </div>
        <Navigator />
      </div>
      <footer className="flex h-[13px] shrink-0 items-start border-t border-[#d0d0d0] pl-[2px]">
        <span className="mt-[2px] flex-1">Tworzy kształt na podstawie zaznaczenia.</span>
        <span className="mr-[69px]"><Icon name="windows" /></span>
      </footer>
      <ContextMenu />
    </div>
  );
}
